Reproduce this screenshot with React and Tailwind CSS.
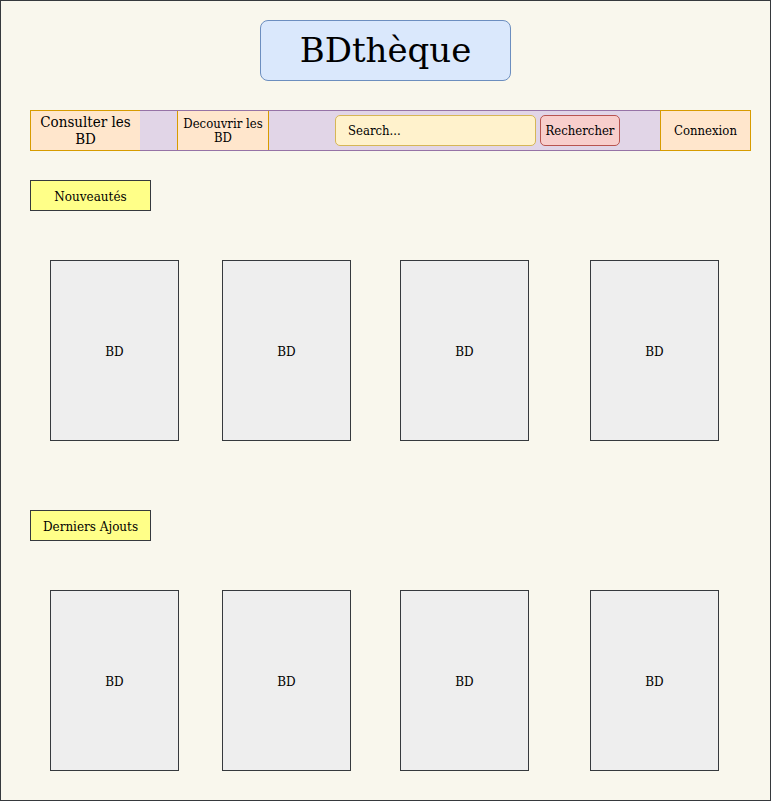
import React from "react";

const serif = { fontFamily: '"DejaVu Serif", "Liberation Serif", serif' };

function Card({ className = "" }) {
  return (
    <div
      className={`w-[129px] h-[181px] bg-[#eeeeee] border border-[#36393d] flex items-center justify-center pt-[2px] text-[12px] text-black ${className}`}
    >
      BD
    </div>
  );
}

function Section({ title, top }) {
  return (
    <section className={top}>
      <div className="ml-[29px] w-[121px] h-[31px] bg-[#ffff88] border border-[#36393d] flex items-center justify-center pt-[2px] text-[12px] text-black">
        {title}
      </div>
      <div className="flex mt-[49px] ml-[49px]">
        <Card />
        <Card className="ml-[43px]" />
        <Card className="ml-[49px]" />
        <Card className="ml-[61px]" />
      </div>
    </section>
  );
}

export default function App() {
  return (
    <div
      className="w-[771px] h-[801px] bg-[#f9f7ed] border border-[#36393d] overflow-hidden"
      style={serif}
    >
      <header className="flex justify-center pt-[19px]">
        <div className="w-[251px] h-[61px] bg-[#dae8fc] border border-[#6c8ebf] rounded-[8px] flex items-center justify-center text-[34px] text-black">
          BDthèque
        </div>
      </header>

      <nav className="flex mt-[29px] ml-[29px] h-[41px] font-stretch-condensed text-black">
        <div className="w-[111px] bg-[#ffe6cc] border border-[#d79b00] flex items-center justify-center text-center text-[15px] leading-[17px]">
          Consulter les
          <br />
          BD
        </div>
        <div className="w-[521px] bg-[#e1d5e7] border-y border-[#9673a6] flex items-center -ml-[1px]">
          <div className="ml-[37px] w-[92px] h-full bg-[#ffe6cc] border-x border-[#d79b00] flex items-center justify-center text-center text-[13px] leading-[14px]">
            Decouvrir les
            <br />
            BD
          </div>
          <div className="ml-[66px] w-[201px] h-[31px] bg-[#fff2cc] border border-[#d6b656] rounded-[5px] flex items-center pl-[12px] text-[13px]">
            Search...
          </div>
          <div className="ml-[4px] w-[80px] h-[31px] bg-[#f8cecc] border border-[#b85450] rounded-[5px] flex items-center justify-center text-[13px]">
            Rechercher
          </div>
        </div>
        <div className="w-[91px] -ml-[1px] bg-[#ffe6cc] border border-[#d79b00] flex items-center justify-center text-[13px]">
          Connexion
        </div>
      </nav>

      <Section title="Nouveautés" top="mt-[29px]" />
      <Section title="Derniers Ajouts" top="mt-[69px]" />
    </div>
  );
}
